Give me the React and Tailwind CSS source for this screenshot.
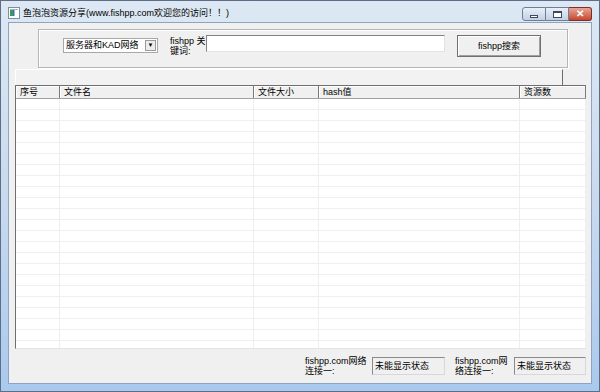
const cols = [
  { label: '序号', w: 'w-[44px]' },
  { label: '文件名', w: 'w-[194px]' },
  { label: '文件大小', w: 'w-[65px]' },
  { label: 'hash值', w: 'w-[201px]' },
  { label: '资源数', w: 'w-[66px]' },
]

const rows = Array.from({ length: 24 })

const AppIcon = () => (
  <svg width="12" height="12" viewBox="0 0 12 12">
    <rect x="0.5" y="0.5" width="11" height="11" fill="#fff" stroke="#7d8ea6" />
    <rect x="2" y="3" width="3" height="6" fill="#3f9b4a" />
    <rect x="5" y="3" width="1.5" height="6" fill="#3a6fc0" />
    <rect x="2" y="2" width="8" height="1" fill="#9fb3cc" />
  </svg>
)

function CaptionButtons() {
  return (
    <div className="flex items-start pt-[6px] pr-[7px]">
      <div className="flex h-[14px] w-[24px] items-center justify-center rounded-l-[3px] border border-[#6c7f98] bg-gradient-to-b from-[#e9eff7] to-[#c3d1e3]">
        <div className="mt-[4px] h-[3px] w-[8px] border border-[#3b4a5e] bg-white" />
      </div>
      <div className="flex h-[14px] w-[23px] items-center justify-center border-y border-r border-[#6c7f98] bg-gradient-to-b from-[#e9eff7] to-[#c3d1e3]">
        <div className="h-[7px] w-[9px] border border-[#3b4a5e] border-t-2 bg-white" />
      </div>
      <div className="flex h-[14px] w-[23px] items-center justify-center rounded-r-[3px] border-y border-r border-[#7a2f2a] bg-gradient-to-b from-[#e7a595] to-[#c4452f] text-[10px] font-bold leading-none text-white">
        ✕
      </div>
    </div>
  )
}

export default function App() {
  return (
    <div
      className="flex h-[392px] w-[600px] flex-col border border-[#5d6f86] bg-gradient-to-b from-[#dde8f4] via-[#c9daee] to-[#a9c9ee] text-[9px] leading-[11px] text-black"
      style={{ fontFamily: '"Liberation Sans", "Noto Sans CJK SC", sans-serif' }}
    >
      {/* title bar */}
      <div className="flex h-[21px] items-start justify-between">
        <div className="flex items-center gap-[3px] pl-[7px] pt-[6px]">
          <AppIcon />
          <span className="text-[9px]">鱼泡泡资源分享(www.fishpp.com欢迎您的访问！！)</span>
        </div>
        <CaptionButtons />
      </div>

      {/* client */}
      <div className="mx-[7px] flex h-[362px] flex-col border border-[#8ea4bf] bg-[#f0f0f0]">
        {/* search group */}
        <div className="ml-[29px] mt-[6px] flex h-[39px] w-[530px] items-start border border-[#b5b5b5] pl-[24px] pt-[5px] shadow-[inset_1px_1px_0_#fff,1px_1px_0_#fff]">
          <div className="mt-[3px] flex h-[15px] w-[95px] items-center border border-[#a8a8a8] bg-white pl-[2px]">
            <span className="flex-1">服务器和KAD网络</span>
            <div className="mr-[1px] flex h-[11px] w-[11px] items-center justify-center border border-[#9a9a9a] bg-[#ececec] text-[6px] text-black">
              ▼
            </div>
          </div>
          <div className="ml-[12px] mt-[1px] w-[36px] leading-[10px]">
            fishpp 关<br />键词:
          </div>
          <div className="h-[17px] w-[239px] border border-t-[#828282] border-l-[#828282] border-r-[#e3e3e3] border-b-[#e3e3e3] bg-white" />
          <div className="ml-[12px] flex h-[22px] w-[84px] items-center justify-center border border-[#707070] bg-[#f0f0f0] shadow-[inset_1px_1px_0_#fff,inset_-1px_-1px_0_#a0a0a0]">
            fishpp搜索
          </div>
        </div>

        {/* panel strip */}
        <div className="ml-[6px] mt-[1px] h-[16px] w-[548px] border-l border-t border-r border-l-white border-t-white border-r-[#6d6d6d] bg-[#f2f2f2]" />

        {/* table */}
        <div className="ml-[6px] flex h-[264px] w-[571px] flex-col overflow-hidden border-l border-t border-[#6e6e6e] border-b border-b-[#e3e3e3] bg-white">
          <div className="flex h-[13px] shrink-0 border-b border-[#a0a0a0] bg-[#f0f0f0]">
            {cols.map((c) => (
              <div
                key={c.label}
                className={`${c.w} shrink-0 border-r border-[#7a7a7a] pl-[4px] leading-[12px] shadow-[inset_1px_1px_0_#fff]`}
              >
                {c.label}
              </div>
            ))}
          </div>
          {rows.map((_, i) => (
            <div key={i} className="flex h-[11px] shrink-0 border-b border-[#efefef]">
              {cols.map((c) => (
                <div key={c.label} className={`${c.w} shrink-0 border-r border-[#efefef]`} />
              ))}
            </div>
          ))}
        </div>

        {/* status */}
        <div className="mt-[7px] flex items-start">
          <div className="ml-[296px] w-[64px] leading-[10px]">
            fishpp.com网络<br />连接一:
          </div>
          <div className="ml-[3px] mt-[1px] flex h-[18px] w-[73px] items-center border border-t-[#8a8a8a] border-l-[#8a8a8a] border-r-[#d8d8d8] border-b-[#d8d8d8] pl-[2px]">
            未能显示状态
          </div>
          <div className="ml-[10px] w-[58px] leading-[10px]">
            fishpp.com网<br />络连接一:
          </div>
          <div className="ml-[1px] mt-[1px] flex h-[18px] w-[72px] items-center border border-t-[#8a8a8a] border-l-[#8a8a8a] border-r-[#d8d8d8] border-b-[#d8d8d8] pl-[2px]">
            未能显示状态
          </div>
        </div>
      </div>
    </div>
  )
}
